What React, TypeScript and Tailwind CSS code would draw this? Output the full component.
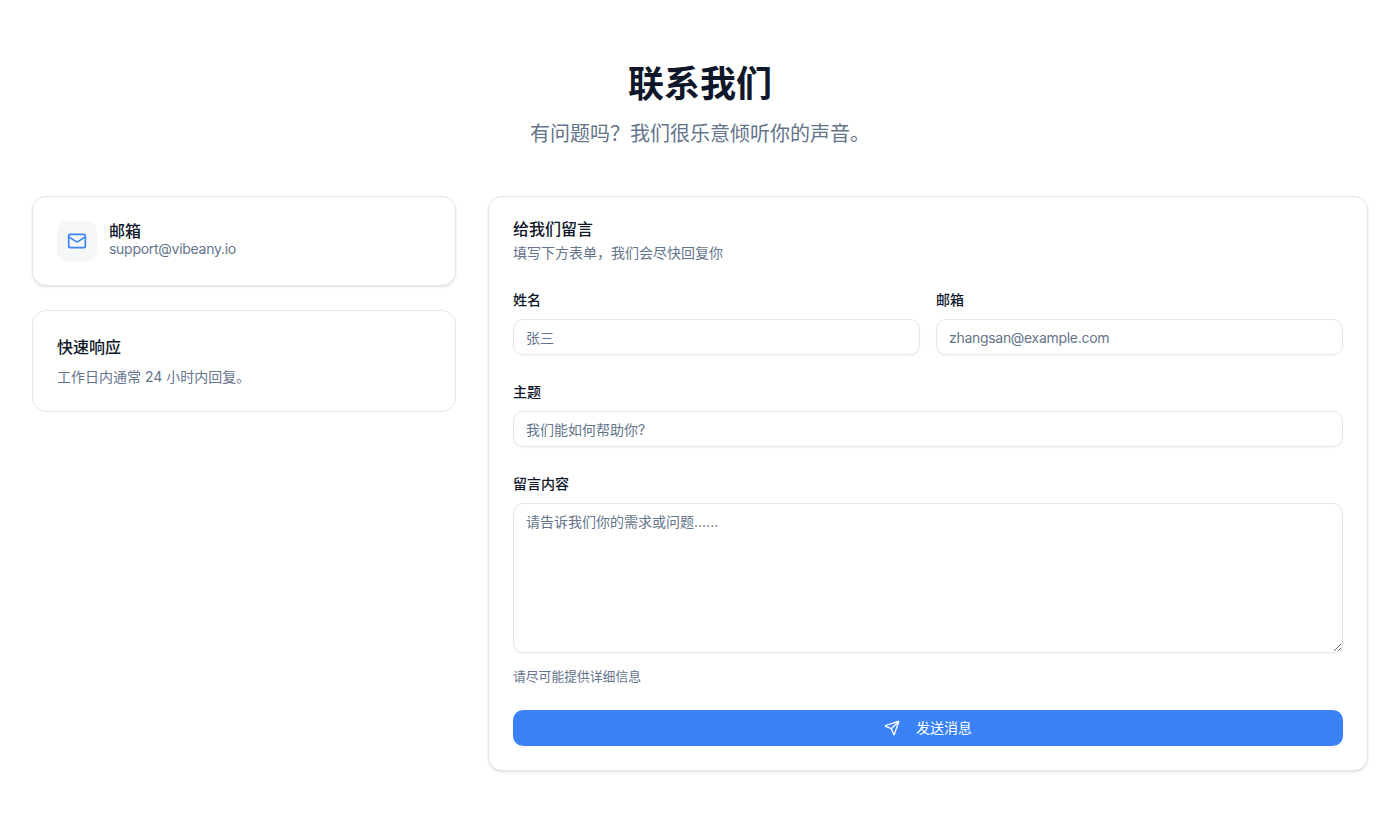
import { Mail, Send } from 'lucide-react';

const fieldClass =
  'h-9 w-full rounded-[10px] border border-[#e2e8f0] bg-white px-3 text-sm text-[#0f172a] shadow-xs outline-none placeholder:text-[#64748b]';

function Field({ label, placeholder, className }: { label: string; placeholder: string; className?: string }) {
  return (
    <div className="flex flex-col gap-3">
      <label className="text-sm leading-none font-medium text-[#0f172a]">{label}</label>
      <input className={`${fieldClass} ${className ?? ''}`} placeholder={placeholder} />
    </div>
  );
}

export default function App() {
  return (
    <div className="min-h-screen bg-white font-['Inter','Noto_Sans_CJK_SC',sans-serif]">
      <div className="mx-auto max-w-[1400px] px-8 py-16">
        {/* Header */}
        <div className="mb-12 text-center">
          <h1 className="text-4xl font-bold text-[#0f172a]">联系我们</h1>
          <p className="mt-4 text-xl text-[#64748b]">{'有问题吗\uFF1F我们很乐意倾听你的声音。'}</p>
        </div>

        <div className="grid grid-cols-3 gap-8">
          {/* Info cards */}
          <div className="flex flex-col gap-6">
            <div className="rounded-[14px] border border-[#e2e8f0] bg-white p-6 shadow-sm">
              <div className="flex items-center gap-3">
                <div className="flex h-10 w-10 items-center justify-center rounded-[10px] bg-[#f5f6f8]">
                  <Mail className="h-5 w-5 text-[#3b82f6]" />
                </div>
                <div className="-mt-0.5">
                  <p className="text-base leading-[18px] font-medium text-[#0f172a]">邮箱</p>
                  <p className="text-sm leading-[18px] tracking-[-0.28px] text-[#64748b]">support@vibeany.io</p>
                </div>
              </div>
            </div>

            <div className="rounded-[14px] border border-[#e2e8f0] bg-white p-6">
              <h3 className="text-base font-medium text-[#0f172a]">快速响应</h3>
              <p className="mt-2 text-sm text-[#64748b]">工作日内通常 24 小时内回复。</p>
            </div>
          </div>

          {/* Form */}
          <div className="col-span-2 rounded-[14px] border border-[#e2e8f0] bg-white p-6 shadow-sm">
            <h2 className="text-base leading-none font-medium text-[#0f172a]">给我们留言</h2>
            <p className="mt-1.5 text-sm text-[#64748b]">{'填写下方表单\uFF0C我们会尽快回复你'}</p>

            <form className="mt-[30px] flex flex-col gap-[30px]">
              <div className="grid grid-cols-2 gap-4">
                <Field label="姓名" placeholder="张三" />
                <Field label="邮箱" placeholder="zhangsan@example.com" className="tracking-[-0.3px]" />
              </div>
              <Field label="主题" placeholder="我们能如何帮助你?" />
              <div>
                <div className="flex flex-col gap-3">
                  <label className="text-sm leading-none font-medium text-[#0f172a]">留言内容</label>
                  <textarea
                    className="block h-[150px] w-full rounded-[10px] border border-[#e2e8f0] bg-white px-3 py-2 text-sm text-[#0f172a] shadow-xs outline-none placeholder:text-[#64748b]"
                    placeholder="请告诉我们你的需求或问题......"
                  />
                </div>
                <p className="mt-[14px] text-[12.8px] leading-5 text-[#64748b]">请尽可能提供详细信息</p>
              </div>
            </form>

            <button
              type="button"
              className="mt-[23px] flex h-9 w-full items-center justify-center gap-4 rounded-[10px] bg-[#3b82f6] text-sm font-normal text-white shadow-xs"
            >
              <Send className="h-4 w-4" />
              发送消息
            </button>
          </div>
        </div>
      </div>
    </div>
  );
}
